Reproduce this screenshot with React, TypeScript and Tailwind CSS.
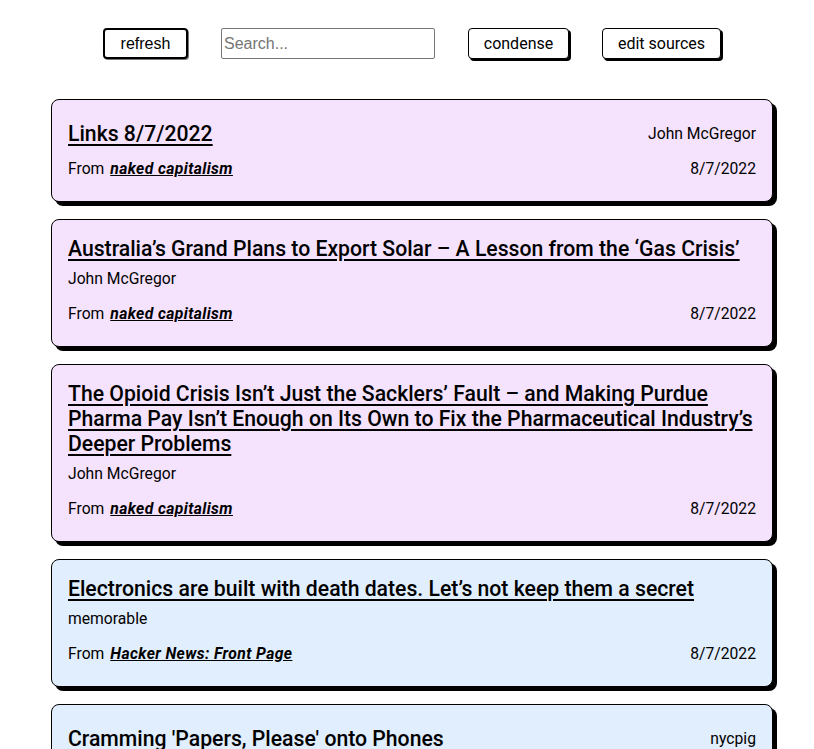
import React from "react";

const FONT = "font-['Roboto',sans-serif]";

type Item = {
  title: string;
  author: string;
  source: string;
  date?: string;
  inline?: boolean;
  color: "pink" | "blue";
};

const items: Item[] = [
  { title: "Links 8/7/2022", author: "John McGregor", source: "naked capitalism", date: "8/7/2022", inline: true, color: "pink" },
  { title: "Australia’s Grand Plans to Export Solar – A Lesson from the ‘Gas Crisis’", author: "John McGregor", source: "naked capitalism", date: "8/7/2022", color: "pink" },
  { title: "The Opioid Crisis Isn’t Just the Sacklers’ Fault – and Making Purdue Pharma Pay Isn’t Enough on Its Own to Fix the Pharmaceutical Industry’s Deeper Problems", author: "John McGregor", source: "naked capitalism", date: "8/7/2022", color: "pink" },
  { title: "Electronics are built with death dates. Let’s not keep them a secret", author: "memorable", source: "Hacker News: Front Page", date: "8/7/2022", color: "blue" },
  { title: "Cramming 'Papers, Please' onto Phones", author: "nycpig", source: "Hacker News: Front Page", date: "8/7/2022", inline: true, color: "blue" },
];

function Card({ it }: { it: Item }) {
  const bg = it.color === "pink" ? "bg-[#f5e3fd]" : "bg-[#e1eefd]";
  return (
    <div className={`${bg} ${FONT} border border-black rounded-lg shadow-[4px_4px_0_#000] px-4 pb-5 ${it.inline ? "pt-[21px]" : "pt-4"} text-black`}>
      {it.inline ? (
        <div className="flex justify-between items-center">
          <a className="underline decoration-2 underline-offset-[3px] text-[21.2px] leading-[25px] font-medium">{it.title}</a>
          <span className="text-[15.7px] leading-6">{it.author}</span>
        </div>
      ) : (
        <>
          <a className="block text-[21.2px] leading-[25px] font-medium underline decoration-2 underline-offset-[3px]">{it.title}</a>
          <div className="mt-[6px] text-[15.7px] leading-6">{it.author}</div>
        </>
      )}
      <div className="mt-[11px] flex justify-between text-[15.7px] leading-6">
        <span>
          From <a className="ml-[2px] font-bold italic underline tracking-[0.4px]">{it.source}</a>
        </span>
        <span>{it.date}</span>
      </div>
    </div>
  );
}

export default function App() {
  return (
    <div className="bg-white min-h-screen pl-[51px] pr-[41px] pt-[28px] overflow-hidden">
      <div className="flex justify-center items-start gap-[33px] h-[71px]">
        <button className="h-[31px] w-[85px] border-2 border-black rounded-[4px] shadow-[1px_1px_0_#777] bg-white font-['Liberation_Sans',sans-serif] text-[16px] text-black">
          refresh
        </button>
        <input
          placeholder="Search..."
          className="h-[31px] w-[214px] border border-[#767676] rounded-[2px] px-[2px] font-['Liberation_Sans',sans-serif] text-[16px] placeholder:text-[#757575] outline-none"
        />
        <button className={`h-[31px] w-[101px] border border-black rounded-[4px] shadow-[2px_2px_0_#000] bg-white ${FONT} text-[16px] text-black`}>
          condense
        </button>
        <button className={`h-[31px] w-[119px] border border-black rounded-[4px] shadow-[2px_2px_0_#000] bg-white ${FONT} text-[16px] text-black`}>
          edit sources
        </button>
      </div>
      <div className="flex flex-col gap-[17px]">
        {items.map((it, i) => (
          <Card key={i} it={it} />
        ))}
      </div>
    </div>
  );
}
